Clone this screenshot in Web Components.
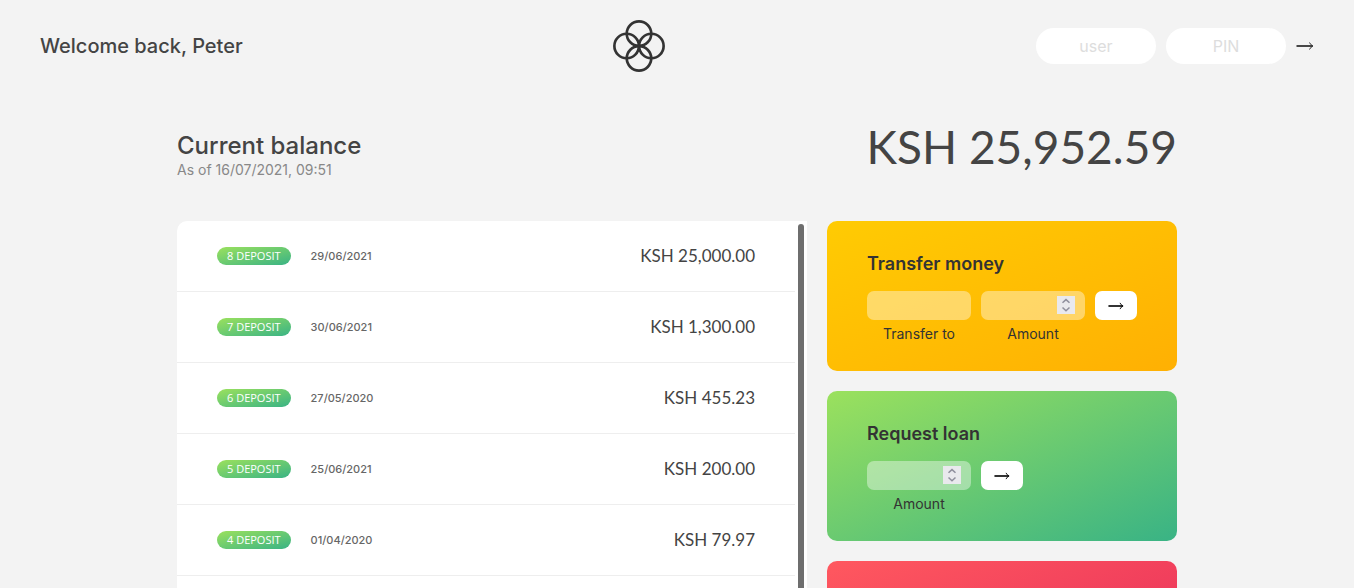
<!DOCTYPE html>
<html lang="en">
<head>
<meta charset="utf-8">
<title>Bankist</title>
<style>
  html, body { height: 100%; }
  body {
    margin: 0;
    overflow: hidden;
    background: #f3f3f3;
    color: #444;
    font-family: Inter, "Open Sans", sans-serif;
    --figures: Lato, Inter, sans-serif;
    --green: linear-gradient(to top left, #39b385, #9be15d);
    --yellow: linear-gradient(to top left, #ffb003, #ffcb03);
    --red: linear-gradient(to top left, #e52a5a, #ff585f);
  }
</style>
</head>
<body>
<bank-nav>Welcome back, Peter</bank-nav>
<bank-layout>
  <bank-balance slot="balance" date="16/07/2021, 09:51">KSH 25,952.59</bank-balance>
  <bank-movements slot="movements">
    <bank-movement kind="8 deposit" date="29/06/2021">KSH 25,000.00</bank-movement>
    <bank-movement kind="7 deposit" date="30/06/2021">KSH 1,300.00</bank-movement>
    <bank-movement kind="6 deposit" date="27/05/2020">KSH 455.23</bank-movement>
    <bank-movement kind="5 deposit" date="25/06/2021">KSH 200.00</bank-movement>
    <bank-movement kind="4 deposit" date="01/04/2020">KSH 79.97</bank-movement>
  </bank-movements>
  <bank-card heading="Transfer money" style="--fill: var(--yellow)">
    <bank-field label="Transfer to"></bank-field>
    <bank-field label="Amount" type="number"></bank-field>
    <bank-submit label="Transfer"></bank-submit>
  </bank-card>
  <bank-card heading="Request loan" style="--fill: var(--green)">
    <bank-field label="Amount" type="number"></bank-field>
    <bank-submit label="Request"></bank-submit>
  </bank-card>
  <bank-card style="--fill: var(--red)"></bank-card>
</bank-layout>

<script>
const ARROW = `<svg width="18" height="10" viewBox="0 0 18 10" fill="none" stroke="currentColor" aria-hidden="true">
  <path d="M0.5 5H16.5" stroke-width="1.8"/><path d="M13.5 1.5Q14.5 4 17 5Q14.5 6 13.5 8.5" stroke-width="1"/></svg>`;

class BankElement extends HTMLElement {
  constructor() {
    super();
    this.attachShadow({ mode: 'open' });
  }
  connectedCallback() {
    this.shadowRoot.innerHTML = this.render();
  }
  attr(name) { return this.getAttribute(name) || ''; }
}

customElements.define('bank-nav', class extends BankElement {
  render() {
    return `<style>
      :host { display: block; }
      nav { display: flex; justify-content: space-between; align-items: center; padding: 20px 40px; }
      p { margin: 0; font-size: 20px; line-height: 28px; font-weight: 500; }
      .logo { display: block; width: 52px; height: 52px; }
      form { display: flex; align-items: center; gap: 10px; }
      input {
        box-sizing: border-box; width: 120px; height: 36px; padding: 0 20px; border: 0;
        border-radius: 100px; background: #fff; color: #333; font: 16px/24px Inter, sans-serif; text-align: center;
      }
      input::placeholder { color: #ddd; opacity: 1; }
      button { display: flex; padding: 0; border: 0; background: none; color: #333; }
    </style>
    <nav>
      <p><slot></slot></p>
      <svg class="logo" viewBox="0 0 53 53" fill="none" stroke="#333" stroke-width="2.7" role="img" aria-label="Logo">
        <circle cx="26.5" cy="13.9" r="12.5"/><circle cx="26.5" cy="39.1" r="12.5"/>
        <circle cx="13.9" cy="26.5" r="12.5"/><circle cx="39.1" cy="26.5" r="12.5"/>
      </svg>
      <form>
        <input type="text" placeholder="user" aria-label="user">
        <input type="password" placeholder="PIN" aria-label="PIN">
        <button type="button" aria-label="Log in">${ARROW}</button>
      </form>
    </nav>`;
  }
});

customElements.define('bank-layout', class extends BankElement {
  render() {
    return `<style>
      :host {
        display: grid; box-sizing: border-box; max-width: 1000px; margin: 0 auto; padding-top: 31px;
        grid-template-columns: 9fr 5fr; column-gap: 20px; row-gap: 42px;
      }
      .balance { grid-column: 1 / -1; }
      .cards { display: flex; flex-direction: column; gap: 20px; }
    </style>
    <div class="balance"><slot name="balance"></slot></div>
    <slot name="movements"></slot>
    <div class="cards"><slot></slot></div>`;
  }
});

customElements.define('bank-balance', class extends BankElement {
  render() {
    return `<style>
      :host { display: flex; justify-content: space-between; align-items: flex-start; }
      .text { padding-top: 8px; }
      p { margin: 0; }
      .label { font-size: 24px; line-height: 30px; font-weight: 500; }
      .date { font-size: 14px; line-height: 18px; color: #888; }
      .value { font: 46px/48px var(--figures); }
    </style>
    <div class="text">
      <p class="label">Current balance</p>
      <p class="date">As of ${this.attr('date')}</p>
    </div>
    <p class="value"><slot></slot></p>`;
  }
});

customElements.define('bank-movements', class extends BankElement {
  render() {
    return `<style>
      :host { display: grid; grid-template-columns: 1fr 12px; background: #fff; border-radius: 10px 0 0 10px; }
      .track { padding: 3px; display: flex; }
      .thumb { flex: 1; border-radius: 3px; background: #6e6e6e; }
    </style>
    <div><slot></slot></div>
    <div class="track"><div class="thumb"></div></div>`;
  }
});

customElements.define('bank-movement', class extends BankElement {
  render() {
    return `<style>
      :host { display: flex; align-items: center; gap: 20px; height: 70px; padding: 0 40px; border-bottom: 1px solid #eee; }
      .kind {
        padding: 0 10px; border-radius: 100px; background: var(--green); color: #fff;
        font: 500 11px/18px "Open Sans", sans-serif; text-transform: uppercase;
      }
      .date { font-size: 11px; line-height: 18px; font-weight: 500; color: #666; }
      .value { margin-left: auto; font: 17px/26px var(--figures); }
    </style>
    <span class="kind">${this.attr('kind')}</span>
    <span class="date">${this.attr('date')}</span>
    <span class="value"><slot></slot></span>`;
  }
});

customElements.define('bank-card', class extends BankElement {
  render() {
    const heading = this.attr('heading');
    return `<style>
      :host { display: block; box-sizing: border-box; min-height: 150px; padding: 30px 40px 20px; border-radius: 10px; background: var(--fill); color: #333; }
      h2 { margin: 0 0 14px; font-size: 18px; line-height: 26px; font-weight: 600; }
      form { display: flex; align-items: flex-start; gap: 10px; }
    </style>
    ${heading ? `<h2>${heading}</h2>` : ''}
    <form><slot></slot></form>`;
  }
});

customElements.define('bank-field', class extends BankElement {
  render() {
    const number = this.attr('type') === 'number';
    return `<style>
      :host { display: flex; flex-direction: column; align-items: center; gap: 5px; width: 104px; }
      .box { position: relative; width: 100%; height: 29px; }
      input {
        box-sizing: border-box; display: block; width: 100%; height: 100%; padding: 0 10px; border: 0; border-radius: 7px;
        background: rgba(255, 255, 255, .4); color: #333; font: 15px/20px Inter, sans-serif; text-align: center; appearance: textfield;
      }
      input::-webkit-inner-spin-button { appearance: none; margin: 0; }
      .spin { position: absolute; right: 10px; top: 5px; display: block; background: #e9e9ed; }
      label { font-size: 14px; line-height: 18px; }
    </style>
    <div class="box">
      <input id="f" type="${number ? 'number' : 'text'}">
      ${number ? `<svg class="spin" width="18" height="18" viewBox="0 0 18 18" fill="none" stroke="#8f8f9d" stroke-width="1.5" aria-hidden="true">
        <path d="M5.5 6.8 9 3.6l3.5 3.2M5.5 11.5 9 14.7l3.5-3.2"/></svg>` : ''}
    </div>
    <label for="f">${this.attr('label')}</label>`;
  }
});

customElements.define('bank-submit', class extends BankElement {
  render() {
    return `<style>
      :host { display: block; }
      button { display: flex; align-items: center; justify-content: center; width: 42px; height: 29px; padding: 0; border: 0; border-radius: 7px; background: #fff; color: #000; }
      svg { width: 16px; height: 10px; }
    </style>
    <button type="button" aria-label="${this.attr('label')}">${ARROW}</button>`;
  }
});
</script>
</body>
</html>
